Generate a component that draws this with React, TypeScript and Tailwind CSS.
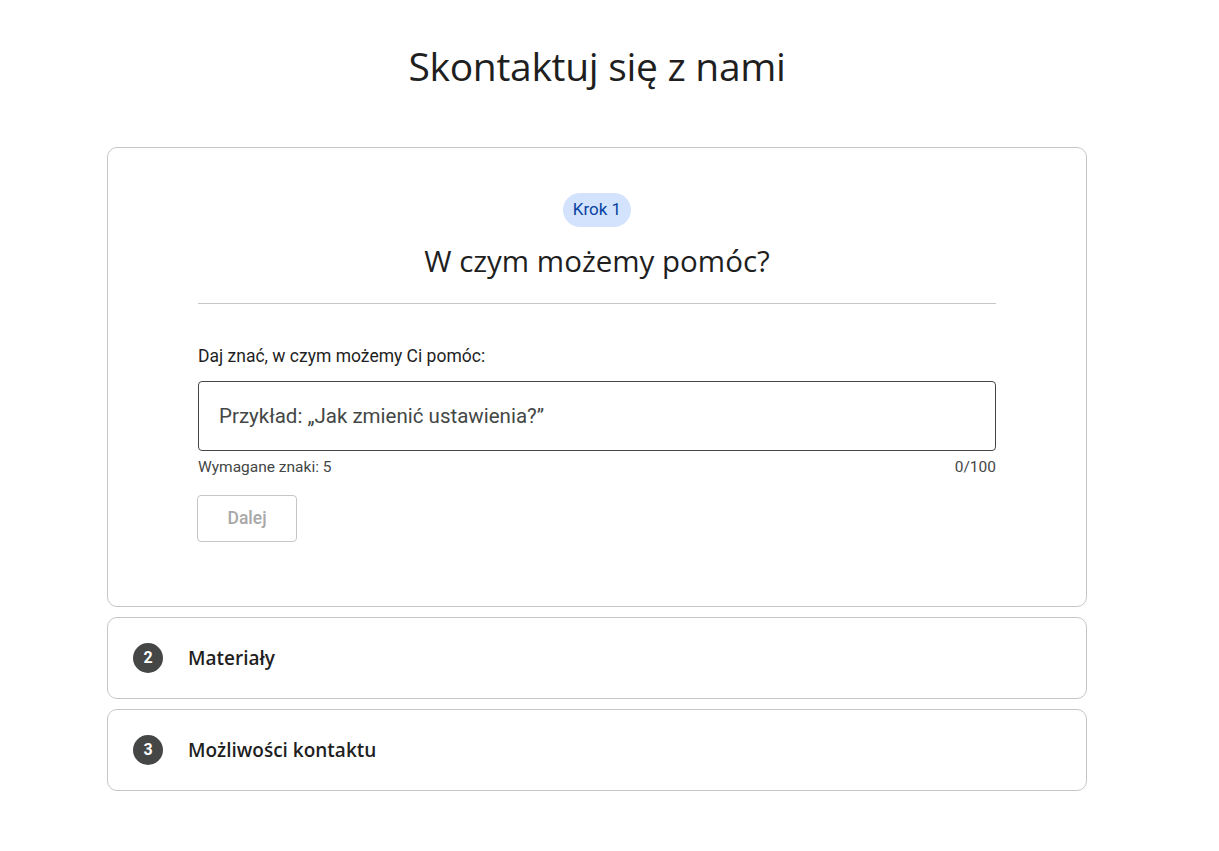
import React from 'react';

const heading = { fontFamily: '"Open Sans", "Liberation Sans", sans-serif' };
const body = { fontFamily: 'Roboto, "Liberation Sans", sans-serif' };

const steps = [
  { n: 2, title: 'Materiały' },
  { n: 3, title: 'Możliwości kontaktu' },
];

export default function App() {
  return (
    <div className="min-h-screen bg-white text-[#1f1f1f]" style={body}>
      <div className="ml-[107px] w-[980px] pt-[40px] pb-12">
        <h1 className="text-center text-[39px] leading-[52px] tracking-[-0.3px] text-[#1f1f1f]" style={heading}>
          Skontaktuj się z nami
        </h1>

        <div className="mt-[55px] flex flex-col gap-[10px]">
          {/* Step 1 */}
          <div className="rounded-[10px] border border-[#c4c7c5] px-[90px] pt-[45px] pb-[64px]">
            <div className="flex flex-col items-center">
              <span className="rounded-full bg-[#d3e3fd] px-[10px] h-[34px] flex items-center text-[17px] text-[#0842a0]">
                Krok 1
              </span>
              <h2 className="mt-[13px] text-[29.5px] leading-[42px] text-[#1f1f1f]" style={heading}>
                W czym możemy pomóc?
              </h2>
            </div>
            <div className="mt-[21px] h-px bg-[#c4c7c5]" />

            <label className="mt-[41px] block text-[17.5px] leading-[22px] text-[#1f1f1f]">
              Daj znać, w czym możemy Ci pomóc:
            </label>
            <div className="mt-[14px] flex h-[70px] items-center rounded-[4px] border border-[#444746] px-[20px]">
              <span className="text-[20.5px] text-[#444746]">Przykład: „Jak zmienić ustawienia?”</span>
            </div>
            <div className="mt-[7px] flex justify-between text-[15.5px] leading-[18px] text-[#444746]">
              <span>Wymagane znaki: 5</span>
              <span>0/100</span>
            </div>
            <button className="mt-[19px] -ml-px h-[47px] w-[100px] rounded-[4px] border border-[#c4c7c5] text-[17.5px] font-medium text-[#a8a8a8]">
              Dalej
            </button>
          </div>

          {steps.map((s) => (
            <div
              key={s.n}
              className="flex h-[82px] items-center gap-[25px] rounded-[10px] border border-[#c4c7c5] px-[25px]"
            >
              <span className="flex h-[30px] w-[30px] items-center justify-center rounded-full bg-[#444746] text-[16px] font-bold text-white">
                {s.n}
              </span>
              <span className="text-[19px] font-semibold text-[#1f1f1f]" style={heading}>
                {s.title}
              </span>
            </div>
          ))}
        </div>
      </div>
    </div>
  );
}
